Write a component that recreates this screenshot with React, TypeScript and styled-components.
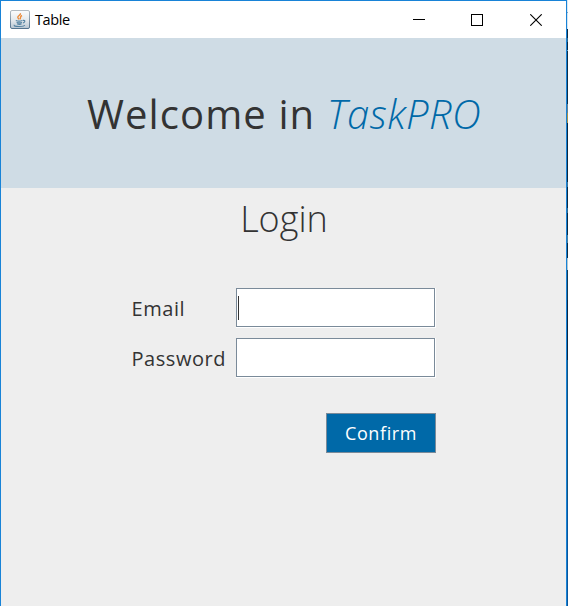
import React from "react";
import styled, { createGlobalStyle } from "styled-components";

const GlobalStyle = createGlobalStyle`
  * { box-sizing: border-box; }
  body { margin: 0; overflow: hidden; font-family: "Open Sans", sans-serif; color: #333; }
`;

const Desktop = styled.div`
  width: 568px;
  height: 606px;
  padding-right: 1px;
  background: linear-gradient(
    #dce9f2 0 12px, #7ba4c4 12px 13px, #d4e5f2 13px 29px, #0a2a45 29px 38px,
    #2f6489 38px 42px, #0b2b45 42px 50px, #71a0bd 50px 51px, #0d2e48 51px 104px,
    #697f8c 104px 113px, #a89048 113px 123px, #0c2840 123px 182px, #3d7294 182px 187px,
    #0c2a43 187px 208px, #35698b 208px 213px, #0b2b44 213px 235px, #4a7d99 235px 243px,
    #0b2b44 243px 258px, #b3c7cf 258px 270px, #123955 270px 300px, #092744 300px 360px,
    #12527f 360px 500px, #0a559a 500px
  );
`;

const Window = styled.main`
  height: 606px;
  border: 1px solid #1883d7;
  border-bottom: 0;
  background: #eee;
`;

const TitleBar = styled.header`
  height: 37px;
  display: flex;
  align-items: center;
  background: #fff;
  padding-left: 9px;
`;

const TitleText = styled.span`
  flex: 1;
  margin-left: 5px;
  font: 14.5px/20px "Open Sans", sans-serif;
  letter-spacing: -0.4px;
  color: #000;
`;

const Controls = styled.div`
  display: flex;
  gap: 46px;
  padding-right: 24px;
  svg { display: block; }
  svg:last-child { margin-left: 1px; }
`;

const Banner = styled.section`
  height: 150px;
  padding-top: 49px;
  padding-left: 86px;
  display: flex;
  background: #cfdce5;
  white-space: pre;
`;

const Greeting = styled.span`
  width: 240px;
  font-size: 40px;
  font-weight: 400;
  line-height: 54px;
  letter-spacing: 1.1px;
`;

const Brand = styled.em`
  font-size: 40px;
  font-weight: 300;
  line-height: 54px;
  letter-spacing: 0.45px;
  color: #0069a8;
`;

const Heading = styled.h1`
  margin: 0;
  padding-top: 6px;
  padding-left: 1px;
  height: 100px;
  font-size: 36px;
  font-weight: 300;
  line-height: 49px;
  text-align: center;
`;

const Form = styled.div`
  display: grid;
  grid-template-columns: 105px 200px;
  row-gap: 10px;
  padding-left: 130px;
`;

const Label = styled.label`
  padding-left: 0.5px;
  font-size: 20px;
  font-weight: 400;
  line-height: 42px;
  height: 40px;
  letter-spacing: 0.55px;
`;

const Field = styled.div`
  height: 40px;
  border-right: 1px solid #fff;
  border-bottom: 1px solid #fff;
  display: flex;
`;

const FieldInner = styled.div`
  flex: 1;
  border: 1px solid #7a8a99;
  background: #fff;
  padding: 7px 1px;
`;

const Caret = styled.div`
  width: 1px;
  height: 24px;
  background: #333;
`;

const Confirm = styled.button`
  grid-column: 2;
  justify-self: end;
  width: 110px;
  height: 40px;
  margin-top: 25px;
  padding: 0;
  border: 1px solid #7a8a99;
  background: #0069a8;
  color: #fff;
  font: 18px/38px "Open Sans", sans-serif;
  letter-spacing: 0.6px;
`;

const JavaIcon = () => (
  <svg width="20" height="20" viewBox="0 0 20 20">
    <defs>
      <linearGradient id="tile" x1="0" y1="0" x2="0" y2="1">
        <stop offset="0" stopColor="#fbfcfd" />
        <stop offset="0.55" stopColor="#e3e8ec" />
        <stop offset="1" stopColor="#b7c5d1" />
      </linearGradient>
      <linearGradient id="edge" x1="0" y1="0" x2="0" y2="1">
        <stop offset="0" stopColor="#b2bac1" />
        <stop offset="1" stopColor="#54748f" />
      </linearGradient>
    </defs>
    <rect x="0.5" y="0.5" width="19" height="18" rx="1.5" fill="url(#tile)" stroke="url(#edge)" />
    <path d="M10.4 3.2C11.2 5 7.5 5.7 7.8 7.3C8 8.2 8.7 8.7 8.8 9.5M12 5.5C9.4 6.5 11.3 7.7 9.9 9.3" fill="none" stroke="#ec8b3b" strokeWidth="1.4" />
    <path d="M5.8 10.5Q9 11.7 12.5 10.5M6.6 12.4Q9.4 13.4 12 12.4M7.2 14Q9.5 14.7 11.5 14M4.3 14.8Q3.5 16.6 9.3 16.5Q14.5 16.4 14.6 15M13 10.4C15.8 10 15 12.5 12.9 13" fill="none" stroke="#5382a1" strokeWidth="1.1" />
  </svg>
);

export default function App() {
  return (
    <>
      <GlobalStyle />
      <Desktop>
        <Window>
          <TitleBar>
            <JavaIcon />
            <TitleText>Table</TitleText>
            <Controls>
              <svg width="12" height="12"><rect y="5" width="12" height="1" /></svg>
              <svg width="12" height="12"><rect x="0.5" y="0.5" width="11" height="11" fill="none" stroke="#000" /></svg>
              <svg width="12" height="12"><path d="M0.3 0.3 11.7 11.7M11.7 0.3 0.3 11.7" stroke="#000" strokeWidth="1.1" /></svg>
            </Controls>
          </TitleBar>
          <Banner>
            <Greeting>Welcome in</Greeting>
            <Brand>TaskPRO</Brand>
          </Banner>
          <Heading>Login</Heading>
          <Form>
            <Label>Email</Label>
            <Field><FieldInner><Caret /></FieldInner></Field>
            <Label>Password</Label>
            <Field><FieldInner /></Field>
            <Confirm>Confirm</Confirm>
          </Form>
        </Window>
      </Desktop>
    </>
  );
}
